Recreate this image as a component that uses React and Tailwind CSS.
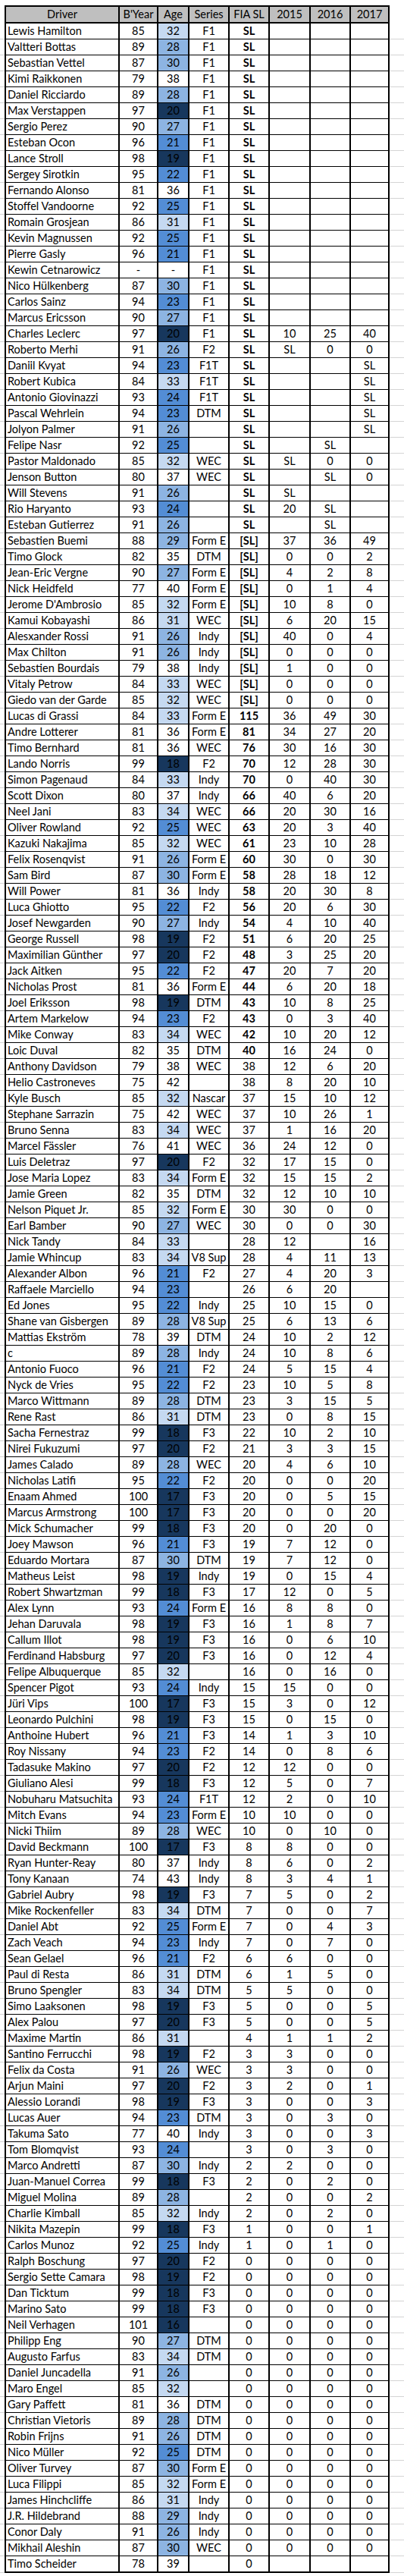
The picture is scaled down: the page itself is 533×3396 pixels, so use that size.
import React from "react";

// name | b'year | age | series | fia sl | 2015 | 2016 | 2017
const DATA = `Lewis Hamilton|85|32|F1|SL|||
Valtteri Bottas|89|28|F1|SL|||
Sebastian Vettel|87|30|F1|SL|||
Kimi Raikkonen|79|38|F1|SL|||
Daniel Ricciardo|89|28|F1|SL|||
Max Verstappen|97|20|F1|SL|||
Sergio Perez|90|27|F1|SL|||
Esteban Ocon|96|21|F1|SL|||
Lance Stroll|98|19|F1|SL|||
Sergey Sirotkin|95|22|F1|SL|||
Fernando Alonso|81|36|F1|SL|||
Stoffel Vandoorne|92|25|F1|SL|||
Romain Grosjean|86|31|F1|SL|||
Kevin Magnussen|92|25|F1|SL|||
Pierre Gasly|96|21|F1|SL|||
Kewin Cetnarowicz|-|-|F1|SL|||
Nico Hülkenberg|87|30|F1|SL|||
Carlos Sainz|94|23|F1|SL|||
Marcus Ericsson|90|27|F1|SL|||
Charles Leclerc|97|20|F1|SL|10|25|40
Roberto Merhi|91|26|F2|SL|SL|0|0
Daniil Kvyat|94|23|F1T|SL|||SL
Robert Kubica|84|33|F1T|SL|||SL
Antonio Giovinazzi|93|24|F1T|SL|||SL
Pascal Wehrlein|94|23|DTM|SL|||SL
Jolyon Palmer|91|26||SL|||SL
Felipe Nasr|92|25||SL||SL|
Pastor Maldonado|85|32|WEC|SL|SL|0|0
Jenson Button|80|37|WEC|SL||SL|0
Will Stevens|91|26||SL|SL||
Rio Haryanto|93|24||SL|20|SL|
Esteban Gutierrez|91|26||SL||SL|
Sebastien Buemi|88|29|Form E|[SL]|37|36|49
Timo Glock|82|35|DTM|[SL]|0|0|2
Jean-Eric Vergne|90|27|Form E|[SL]|4|2|8
Nick Heidfeld|77|40|Form E|[SL]|0|1|4
Jerome D'Ambrosio|85|32|Form E|[SL]|10|8|0
Kamui Kobayashi|86|31|WEC|[SL]|6|20|15
Alesxander Rossi|91|26|Indy|[SL]|40|0|4
Max Chilton|91|26|Indy|[SL]|0|0|0
Sebastien Bourdais|79|38|Indy|[SL]|1|0|0
Vitaly Petrow|84|33|WEC|[SL]|0|0|0
Giedo van der Garde|85|32|WEC|[SL]|0|0|0
Lucas di Grassi|84|33|Form E|115|36|49|30
Andre Lotterer|81|36|Form E|81|34|27|20
Timo Bernhard|81|36|WEC|76|30|16|30
Lando Norris|99|18|F2|70|12|28|30
Simon Pagenaud|84|33|Indy|70|0|40|30
Scott Dixon|80|37|Indy|66|40|6|20
Neel Jani|83|34|WEC|66|20|30|16
Oliver Rowland|92|25|WEC|63|20|3|40
Kazuki Nakajima|85|32|WEC|61|23|10|28
Felix Rosenqvist|91|26|Form E|60|30|0|30
Sam Bird|87|30|Form E|58|28|18|12
Will Power|81|36|Indy|58|20|30|8
Luca Ghiotto|95|22|F2|56|20|6|30
Josef Newgarden|90|27|Indy|54|4|10|40
George Russell|98|19|F2|51|6|20|25
Maximilian Günther|97|20|F2|48|3|25|20
Jack Aitken|95|22|F2|47|20|7|20
Nicholas Prost|81|36|Form E|44|6|20|18
Joel Eriksson|98|19|DTM|43|10|8|25
Artem Markelow|94|23|F2|43|0|3|40
Mike Conway|83|34|WEC|42|10|20|12
Loic Duval|82|35|DTM|40|16|24|0
Anthony Davidson|79|38|WEC|38|12|6|20
Helio Castroneves|75|42||38|8|20|10
Kyle Busch|85|32|Nascar|37|15|10|12
Stephane Sarrazin|75|42|WEC|37|10|26|1
Bruno Senna|83|34|WEC|37|1|16|20
Marcel Fässler|76|41|WEC|36|24|12|0
Luis Deletraz|97|20|F2|32|17|15|0
Jose Maria Lopez|83|34|Form E|32|15|15|2
Jamie Green|82|35|DTM|32|12|10|10
Nelson Piquet Jr.|85|32|Form E|30|30|0|0
Earl Bamber|90|27|WEC|30|0|0|30
Nick Tandy|84|33||28|12||16
Jamie Whincup|83|34|V8 Sup|28|4|11|13
Alexander Albon|96|21|F2|27|4|20|3
Raffaele Marciello|94|23||26|6|20|
Ed Jones|95|22|Indy|25|10|15|0
Shane van Gisbergen|89|28|V8 Sup|25|6|13|6
Mattias Ekström|78|39|DTM|24|10|2|12
c|89|28|Indy|24|10|8|6
Antonio Fuoco|96|21|F2|24|5|15|4
Nyck de Vries|95|22|F2|23|10|5|8
Marco Wittmann|89|28|DTM|23|3|15|5
Rene Rast|86|31|DTM|23|0|8|15
Sacha Fernestraz|99|18|F3|22|10|2|10
Nirei Fukuzumi|97|20|F2|21|3|3|15
James Calado|89|28|WEC|20|4|6|10
Nicholas Latifi|95|22|F2|20|0|0|20
Enaam Ahmed|100|17|F3|20|0|5|15
Marcus Armstrong|100|17|F3|20|0|0|20
Mick Schumacher|99|18|F3|20|0|20|0
Joey Mawson|96|21|F3|19|7|12|0
Eduardo Mortara|87|30|DTM|19|7|12|0
Matheus Leist|98|19|Indy|19|0|15|4
Robert Shwartzman|99|18|F3|17|12|0|5
Alex Lynn|93|24|Form E|16|8|8|0
Jehan Daruvala|98|19|F3|16|1|8|7
Callum Illot|98|19|F3|16|0|6|10
Ferdinand Habsburg|97|20|F3|16|0|12|4
Felipe Albuquerque|85|32||16|0|16|0
Spencer Pigot|93|24|Indy|15|15|0|0
Jüri Vips|100|17|F3|15|3|0|12
Leonardo Pulchini|98|19|F3|15|0|15|0
Anthoine Hubert|96|21|F3|14|1|3|10
Roy Nissany|94|23|F2|14|0|8|6
Tadasuke Makino|97|20|F2|12|12|0|0
Giuliano Alesi|99|18|F3|12|5|0|7
Nobuharu Matsuchita|93|24|F1T|12|2|0|10
Mitch Evans|94|23|Form E|10|10|0|0
Nicki Thiim|89|28|WEC|10|0|10|0
David Beckmann|100|17|F3|8|8|0|0
Ryan Hunter-Reay|80|37|Indy|8|6|0|2
Tony Kanaan|74|43|Indy|8|3|4|1
Gabriel Aubry|98|19|F3|7|5|0|2
Mike Rockenfeller|83|34|DTM|7|0|0|7
Daniel Abt|92|25|Form E|7|0|4|3
Zach Veach|94|23|Indy|7|0|7|0
Sean Gelael|96|21|F2|6|6|0|0
Paul di Resta|86|31|DTM|6|1|5|0
Bruno Spengler|83|34|DTM|5|5|0|0
Simo Laaksonen|98|19|F3|5|0|0|5
Alex Palou|97|20|F3|5|0|0|5
Maxime Martin|86|31||4|1|1|2
Santino Ferrucchi|98|19|F2|3|3|0|0
Felix da Costa|91|26|WEC|3|3|0|0
Arjun Maini|97|20|F2|3|2|0|1
Alessio Lorandi|98|19|F3|3|0|0|3
Lucas Auer|94|23|DTM|3|0|3|0
Takuma Sato|77|40|Indy|3|0|0|3
Tom Blomqvist|93|24||3|0|3|0
Marco Andretti|87|30|Indy|2|2|0|0
Juan-Manuel Correa|99|18|F3|2|0|2|0
Miguel Molina|89|28||2|0|0|2
Charlie Kimball|85|32|Indy|2|0|2|0
Nikita Mazepin|99|18|F3|1|0|0|1
Carlos Munoz|92|25|Indy|1|0|1|0
Ralph Boschung|97|20|F2|0|0|0|0
Sergio Sette Camara|98|19|F2|0|0|0|0
Dan Ticktum|99|18|F3|0|0|0|0
Marino Sato|99|18|F3|0|0|0|0
Neil Verhagen|101|16||0|0|0|0
Philipp Eng|90|27|DTM|0|0|0|0
Augusto Farfus|83|34|DTM|0|0|0|0
Daniel Juncadella|91|26||0|0|0|0
Maro Engel|85|32||0|0|0|0
Gary Paffett|81|36|DTM|0|0|0|0
Christian Vietoris|89|28|DTM|0|0|0|0
Robin Frijns|91|26|DTM|0|0|0|0
Nico Müller|92|25|DTM|0|0|0|0
Oliver Turvey|87|30|Form E|0|0|0|0
Luca Filippi|85|32|Form E|0|0|0|0
James Hinchcliffe|86|31|Indy|0|0|0|0
J.R. Hildebrand|88|29|Indy|0|0|0|0
Conor Daly|91|26|Indy|0|0|0|0
Mikhail Aleshin|87|30|WEC|0|0|0|0
Timo Scheider|78|39||0|||`;

const drivers = DATA.split("\n").map((line) => line.split("|"));

const ageColor = (age) => {
  const n = parseInt(age, 10);
  if (isNaN(n) || n >= 35) return "";
  if (n <= 20) return "bg-[#17375d]";
  if (n <= 25) return "bg-[#538dd5]";
  if (n <= 30) return "bg-[#8db4e2]";
  return "bg-[#c5d9f1]";
};

const isBold = (fia) =>
  fia === "SL" || fia === "[SL]" || parseInt(fia, 10) >= 40;

const cell = "h-full border-r-2 border-black text-center whitespace-nowrap";

function Row({ row, last }) {
  const [name, byear, age, series, fia, y15, y16, y17] = row;
  return (
    <div className="flex">
      <div className="w-[6px] border-b border-[#d4d4d4]" />
      <div
        className={`flex border-l-2 border-black leading-[20px] ${
          last ? "h-[22px] border-b-2" : "h-[21px] border-b"
        }`}
      >
        <div className="h-full w-[150px] overflow-hidden border-r-2 border-black pl-[2px] whitespace-nowrap">
          {name}
        </div>
        <div className={`${cell} w-[51px]`}>{byear}</div>
        <div className={`${cell} w-[41px] ${ageColor(age)}`}>{age}</div>
        <div className={`${cell} w-[53px]`}>{series}</div>
        <div className={`${cell} w-[53px] ${isBold(fia) ? "font-bold" : ""}`}>
          {fia}
        </div>
        <div className={`${cell} w-[54px]`}>{y15}</div>
        <div className={`${cell} w-[53px]`}>{y16}</div>
        <div className={`${cell} w-[51px]`}>{y17}</div>
      </div>
      <div className="flex-1 border-b border-[#d4d4d4]" />
    </div>
  );
}

export default function App() {
  const headers = [
    ["Driver", "w-[150px]"],
    ["B'Year", "w-[51px]"],
    ["Age", "w-[41px]"],
    ["Series", "w-[53px]"],
    ["FIA SL", "w-[53px]"],
    ["2015", "w-[54px]"],
    ["2016", "w-[53px]"],
    ["2017", "w-[51px]"],
  ];

  return (
    <div className="w-[533px] bg-white pt-[7px] font-['Lato','Noto_Sans',sans-serif] text-[14.5px] text-black">
      <div className="flex">
        <div className="w-[6px]" />
        <div className="flex h-[24px] border-y-2 border-l-2 border-black bg-[#bfbfbf] leading-[20px]">
          {headers.map(([label, w]) => (
            <div key={label} className={`${cell} ${w}`}>
              {label}
            </div>
          ))}
        </div>
        <div className="flex-1" />
      </div>
      {drivers.map((row, i) => (
        <Row key={i} row={row} last={i === drivers.length - 1} />
      ))}
    </div>
  );
}
